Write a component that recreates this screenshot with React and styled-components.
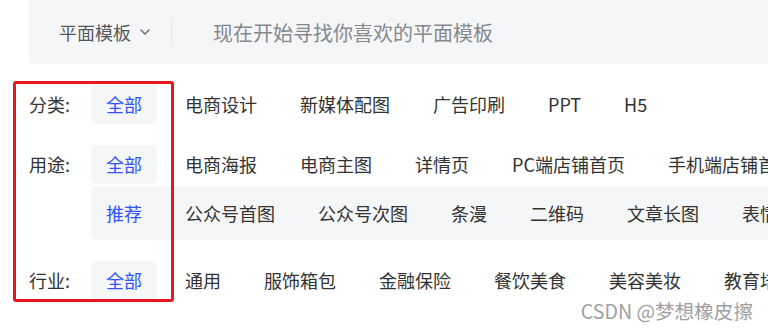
import React from "react";
import styled, { createGlobalStyle } from "styled-components";

const GlobalStyle = createGlobalStyle`
  html, body {
    margin: 0;
    padding: 0;
    background: #ffffff;
  }
  body {
    font-family: "Noto Sans CJK SC", "Noto Sans", sans-serif;
  }
`;

const Page = styled.div`
  position: relative;
  width: 768px;
  height: 328px;
  padding-left: 29px;
  box-sizing: border-box;
  overflow: hidden;
`;

const SearchBar = styled.div`
  height: 64px;
  background: #f5f6f8;
  border-radius: 0 0 0 5px;
  display: flex;
  align-items: center;
  padding-left: 30px;
  white-space: nowrap;
`;

const Category = styled.span`
  font-size: 18px;
  color: #555a60;
`;

const Chevron = styled.svg`
  margin-left: 9px;
  width: 10px;
  height: 6px;
`;

const Divider = styled.span`
  width: 1px;
  height: 26px;
  background: #e4e6e9;
  margin: 0 41px 0 21px;
`;

const Placeholder = styled.span`
  font-size: 20px;
  color: #85888d;
`;

const Filters = styled.div`
  margin-top: 21px;
  display: flex;
  flex-direction: column;
  gap: 21px;
`;

const Row = styled.div`
  display: flex;
  align-items: flex-start;
`;

const Label = styled.div`
  width: 62px;
  flex-shrink: 0;
  height: 39px;
  line-height: 39px;
  font-size: 18px;
  color: #333;
`;

const Column = styled.div`
  display: flex;
  flex-direction: column;
  gap: 2px;
  flex: 1;
  min-width: 0;
`;

const Options = styled.div`
  display: flex;
  gap: 13px;
  flex-wrap: nowrap;
`;

const SubPanel = styled(Options)`
  height: 54px;
  align-items: center;
  background: #f5f6f8;
  border-radius: 5px 0 0 5px;
`;

const Option = styled.span`
  flex-shrink: 0;
  height: 39px;
  line-height: 39px;
  padding: 0 15px;
  border-radius: 5px;
  font-size: 18px;
  white-space: nowrap;
  color: ${(p) => (p.$active ? "#3352ff" : "#333")};
  background: ${(p) => (p.$active && !p.$flat ? "#f5f6f8" : "transparent")};
`;

const Highlight = styled.div`
  position: absolute;
  left: 13px;
  top: 81px;
  width: 161px;
  height: 221px;
  box-sizing: border-box;
  border: 3px solid #e8161f;
  border-radius: 3px;
  pointer-events: none;
`;

const Watermark = styled.div`
  position: absolute;
  right: 15px;
  bottom: 3px;
  font-size: 19.6px;
  color: #a0a0a0;
  text-shadow: 0 0 2px #fff, 0 0 2px #fff;
  white-space: nowrap;
`;

const groups = [
  { label: "分类:", items: ["电商设计", "新媒体配图", "广告印刷", "PPT", "H5"] },
  {
    label: "用途:",
    items: ["电商海报", "电商主图", "详情页", "PC端店铺首页", "手机端店铺首页"],
    sub: ["公众号首图", "公众号次图", "条漫", "二维码", "文章长图", "表情包"],
  },
  { label: "行业:", items: ["通用", "服饰箱包", "金融保险", "餐饮美食", "美容美妆", "教育培训"] },
];

export default function App() {
  return (
    <>
      <GlobalStyle />
      <Page>
        <SearchBar>
          <Category>平面模板</Category>
          <Chevron viewBox="0 0 10 6">
            <path d="M1 1l4 4 4-4" fill="none" stroke="#6b6f75" strokeWidth="1.5" strokeLinecap="round" strokeLinejoin="round" />
          </Chevron>
          <Divider />
          <Placeholder>现在开始寻找你喜欢的平面模板</Placeholder>
        </SearchBar>

        <Filters>
          {groups.map((g) => (
            <Row key={g.label}>
              <Label>{g.label}</Label>
              <Column>
                <Options>
                  <Option $active>全部</Option>
                  {g.items.map((it) => (
                    <Option key={it}>{it}</Option>
                  ))}
                </Options>
                {g.sub && (
                  <SubPanel>
                    <Option $active $flat>推荐</Option>
                    {g.sub.map((it) => (
                      <Option key={it}>{it}</Option>
                    ))}
                  </SubPanel>
                )}
              </Column>
            </Row>
          ))}
        </Filters>

        <Highlight />
        <Watermark>CSDN @梦想橡皮擦</Watermark>
      </Page>
    </>
  );
}
